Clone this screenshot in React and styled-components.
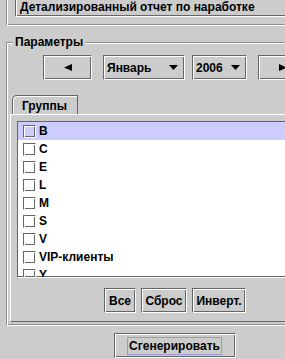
import React from 'react';
import styled, {createGlobalStyle, css} from 'styled-components';

const DARK = '#666666';
const ETCH = '#8f8f8f';
const BG = '#cccccc';

const GlobalStyle = createGlobalStyle`
  html, body {
    margin: 0;
    padding: 0;
    overflow: hidden;
    background: ${BG};
  }
  body {
    font-family: "Liberation Sans", Arial, sans-serif;
    font-size: 12px;
    font-weight: bold;
    color: #000;
  }
  * {
    box-sizing: border-box;
  }
`;

// Metal look: dark outer rect, white inner rect
const flush = css`
  border-style: solid;
  border-width: 1px;
  border-color: ${DARK} #fff #fff ${DARK};
  box-shadow: inset 1px 1px 0 #fff, inset -1px -1px 0 ${DARK};
`;

const etched = css`
  border-style: solid;
  border-width: 1px;
  border-color: ${ETCH} #fff #fff ${ETCH};
  box-shadow: inset 1px 1px 0 #fff, inset -1px -1px 0 ${ETCH};
`;

const Frame = styled.div`
  width: 349px;
  display: flex;
  flex-direction: column;
`;

const HeaderBox = styled.div`
  ${etched};
  margin: -12px 6px 0;
  padding: 7px 7px 8px 8px;
`;

const TitleField = styled.div`
  ${flush};
  padding: 3px 4px 2px;
  line-height: 14px;
  white-space: nowrap;
`;

const ParamsBox = styled.div`
  ${etched};
  position: relative;
  margin: 16px 6px 0;
  padding: 12px 2px 3px 3px;
`;

const ParamsTitle = styled.span`
  position: absolute;
  top: -8px;
  left: 6px;
  padding: 0 3px 0 2px;
  line-height: 14px;
  background: ${BG};
`;

const NavRow = styled.div`
  display: flex;
  justify-content: center;
  gap: 7px;
  height: 25px;
`;

const ArrowButton = styled.div`
  ${flush};
  width: 49px;
  height: 25px;
  margin: 0 4px;
  display: flex;
  align-items: center;
  justify-content: center;
  flex-shrink: 0;
`;

const Combo = styled.div`
  ${flush};
  width: ${p => p.$w}px;
  height: 25px;
  display: flex;
  align-items: center;
  padding: 0 6px 0 3px;
  line-height: 14px;
  flex-shrink: 0;
`;

const ComboText = styled.span`
  flex: 1;
`;

const TabPane = styled.div`
  margin-top: 15px;
  display: flex;
  flex-direction: column;
`;

const TabStrip = styled.div`
  display: flex;
  padding-left: 2px;
`;

const Tab = styled.div`
  width: 66px;
  height: 19px;
  border: 1px solid ${DARK};
  border-bottom: none;
  border-top-left-radius: 5px;
  box-shadow: inset 1px 1px 0 #fff;
  padding: 3px 0 0 9px;
  line-height: 14px;
`;

const TabContent = styled.div`
  border-style: solid;
  border-width: 1px;
  border-color: #fff ${DARK} ${DARK} #fff;
  padding: 6px 6px 8px;
  display: flex;
  flex-direction: column;
`;

const ListBox = styled.div`
  border-style: solid;
  border-width: 1px;
  border-color: ${DARK} #fff #fff ${DARK};
  box-shadow: inset -1px -1px 0 ${DARK};
  height: 157px;
  overflow: hidden;
  background: #fff;
`;

const Row = styled.div`
  height: 18px;
  display: flex;
  align-items: center;
  padding-left: 5px;
  line-height: 14px;
  background: ${p => (p.$selected ? '#ccccff' : 'transparent')};
`;

const Check = styled.span`
  ${flush};
  width: 13px;
  height: 13px;
  margin-right: 3px;
  flex-shrink: 0;
`;

const ButtonRow = styled.div`
  display: flex;
  justify-content: center;
  gap: 5px;
  margin-top: 10px;
`;

const Button = styled.div`
  ${flush};
  width: ${p => p.$w}px;
  height: 25px;
  display: flex;
  align-items: center;
  justify-content: center;
  line-height: 14px;
  white-space: nowrap;
`;

const GenerateButton = styled(Button)`
  margin: 7px auto 0;
`;

const FocusRing = styled.span`
  border: 1px solid #9999cc;
  padding: 0 1px;
  line-height: 16px;
`;

const LeftArrow = () => (
  <svg width="8" height="7" viewBox="0 0 8 7">
    <polygon points="0,3.5 8,0 8,7" fill="#000"/>
  </svg>
);

const RightArrow = () => (
  <svg width="8" height="7" viewBox="0 0 8 7">
    <polygon points="8,3.5 0,0 0,7" fill="#000"/>
  </svg>
);

const DownArrow = () => (
  <svg width="9" height="5" viewBox="0 0 9 5">
    <polygon points="0,0 9,0 4.5,5" fill="#000"/>
  </svg>
);

const groups = ['B', 'C', 'E', 'L', 'M', 'S', 'V', 'VIP-клиенты', 'Y'];

export default function App() {
  return (
    <Frame>
      <GlobalStyle/>
      <HeaderBox>
        <TitleField>Детализированный отчет по наработке</TitleField>
      </HeaderBox>
      <ParamsBox>
        <ParamsTitle>Параметры</ParamsTitle>
        <NavRow>
          <ArrowButton><LeftArrow/></ArrowButton>
          <Combo $w={82}>
            <ComboText>Январь</ComboText>
            <DownArrow/>
          </Combo>
          <Combo $w={55}>
            <ComboText>2006</ComboText>
            <DownArrow/>
          </Combo>
          <ArrowButton><RightArrow/></ArrowButton>
        </NavRow>
        <TabPane>
          <TabStrip>
            <Tab>Группы</Tab>
          </TabStrip>
          <TabContent>
            <ListBox>
              {groups.map((g, i) => (
                <Row key={g} $selected={i === 0}>
                  <Check/>
                  {g}
                </Row>
              ))}
            </ListBox>
            <ButtonRow>
              <Button $w={32}>Все</Button>
              <Button $w={46}>Сброс</Button>
              <Button $w={54}>Инверт.</Button>
            </ButtonRow>
          </TabContent>
        </TabPane>
      </ParamsBox>
      <GenerateButton $w={122}>
        <FocusRing>Сгенерировать</FocusRing>
      </GenerateButton>
    </Frame>
  );
}
